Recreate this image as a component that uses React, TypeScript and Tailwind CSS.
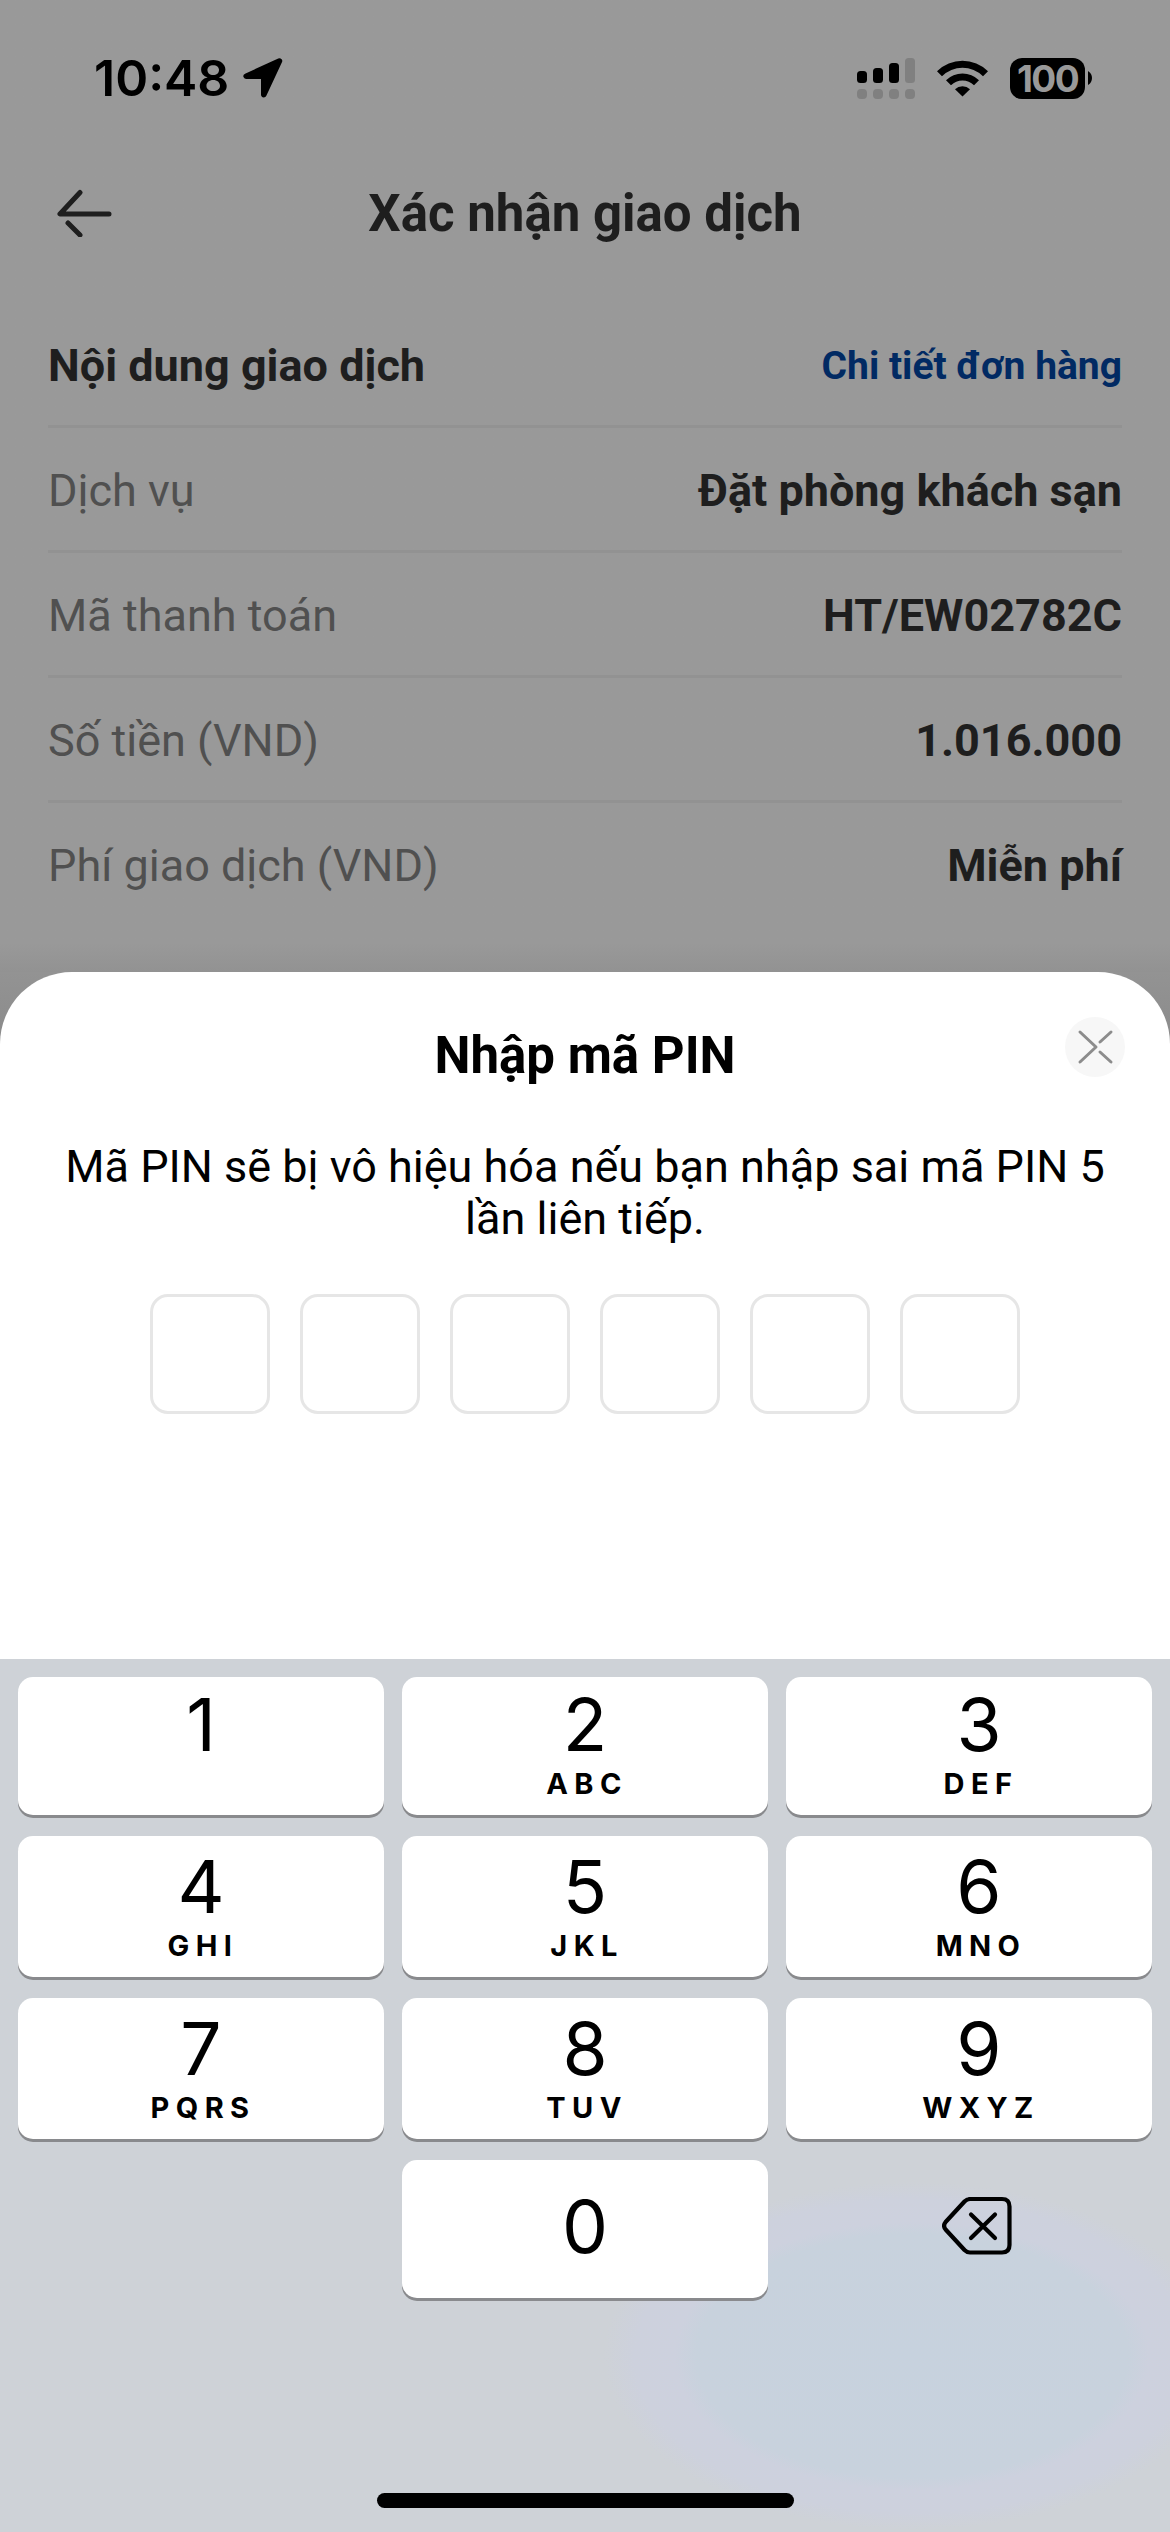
import clsx from "clsx";

type Detail = { label: string; value: string };
type Key = { digit: string; letters?: string };

const details: Detail[] = [
  { label: "Dịch vụ", value: "Đặt phòng khách sạn" },
  { label: "Mã thanh toán", value: "HT/EW02782C" },
  { label: "Số tiền (VND)", value: "1.016.000" },
  { label: "Phí giao dịch (VND)", value: "Miễn phí" }
];

const keyRows: Key[][] = [
  [{ digit: "1" }, { digit: "2", letters: "ABC" }, { digit: "3", letters: "DEF" }],
  [
    { digit: "4", letters: "GHI" },
    { digit: "5", letters: "JKL" },
    { digit: "6", letters: "MNO" }
  ],
  [
    { digit: "7", letters: "PQRS" },
    { digit: "8", letters: "TUV" },
    { digit: "9", letters: "WXYZ" }
  ]
];

function LocationIcon() {
  return (
    <svg width="40" height="40" viewBox="0 0 40 40" className="ml-[14px]">
      <path
        d="M36.4 3 L3.2 18.2 H20.8 V36.6 Z"
        stroke="#000"
        strokeWidth="5.6"
        strokeLinejoin="round"
      />
    </svg>
  );
}

function SignalIcon() {
  return (
    <svg width="58" height="41" viewBox="0 0 58 41">
      <rect x="0" y="13" width="10" height="12" rx="3.5" />
      <rect x="16" y="10" width="10" height="15" rx="3.5" />
      <rect x="32" y="5" width="10" height="20" rx="3.5" />
      <rect x="48" y="0" width="10" height="25" rx="3.5" fill="#808080" />
      {[0, 16, 32, 48].map((x) => (
        <rect key={x} x={x} y="31" width="10" height="10" rx="4" fill="#808080" />
      ))}
    </svg>
  );
}

function WifiIcon() {
  return (
    <svg width="51" height="38" viewBox="0 0 51 38" className="ml-[22px]">
      <path d="M0 12.2 A36.5 36.5 0 0 1 51 12.2 L46 17.2 A29.2 29.2 0 0 0 5 17.2 Z" />
      <path d="M9 21.2 A23.6 23.6 0 0 1 42 21.2 L37 26.2 A16.5 16.5 0 0 0 14 26.2 Z" />
      <path d="M18 30.2 A10.8 10.8 0 0 1 33 30.2 L25.5 37.6 Z" />
    </svg>
  );
}

function Battery() {
  return (
    <div className="ml-[22px] flex items-center gap-[3px]">
      <div className="flex h-[41px] w-[75px] items-center justify-center rounded-[12px] bg-black text-[37px] leading-none font-bold tracking-[-1.6px] text-[#999999]">
        100
      </div>
      <svg width="4" height="14" viewBox="0 0 4 14">
        <path d="M0 0 Q4 2.5 4 7 T0 14 Z" />
      </svg>
    </div>
  );
}

function StatusBar() {
  return (
    <div className="flex h-[156px] items-center justify-between pr-[78px] pl-[94px] font-['Inter',sans-serif] text-black">
      <div className="flex items-center">
        <span className="text-[50px] leading-none font-semibold">10:48</span>
        <LocationIcon />
      </div>
      <div className="flex items-center">
        <SignalIcon />
        <WifiIcon />
        <Battery />
      </div>
    </div>
  );
}

function DetailRow({ label, value, last }: Detail & { last: boolean }) {
  return (
    <div
      className={clsx(
        "flex h-[125px] items-center justify-between border-b-[3px] pt-[3px]",
        last ? "border-transparent" : "border-[#929292]"
      )}
    >
      <span className="text-[#505050]">{label}</span>
      <span className="font-bold text-[#1e1e1e]">{value}</span>
    </div>
  );
}

function Confirmation() {
  return (
    <section className="flex h-[972px] flex-col bg-linear-to-b from-[#999999] from-97% to-[#929292]">
      <StatusBar />
      <header className="grid h-[114px] grid-cols-[1fr_auto_1fr] items-center pl-[56px] text-[#1e1e1e]">
        <svg
          width="56"
          height="48"
          viewBox="0 0 56 48"
          fill="none"
          stroke="currentColor"
          strokeWidth="5"
          strokeLinecap="round"
          strokeLinejoin="round"
        >
          <path d="M24 3.5 L4 25 H53 M12 34 L24 46" />
        </svg>
        <h1 className="-ml-[56px] text-[51px] leading-none font-bold">Xác nhận giao dịch</h1>
      </header>
      <div className="mx-[48px] mt-[33px] text-[45px] leading-none">
        <div className="flex h-[125px] items-center justify-between border-b-[3px] border-[#929292] pt-[2px]">
          <h2 className="font-bold text-[#1e1e1e]">Nội dung giao dịch</h2>
          <a className="pt-[2px] text-[39px] font-bold text-[#012a63]">Chi tiết đơn hàng</a>
        </div>
        {details.map((item, i) => (
          <DetailRow key={item.label} {...item} last={i === details.length - 1} />
        ))}
      </div>
    </section>
  );
}

function PinSheet() {
  return (
    <div className="bg-linear-to-b from-[#939393] to-[#8b8b8b] to-10%">
      <section className="relative flex h-[687px] flex-col items-center rounded-t-[72px] bg-white pt-[58px] text-black">
        <h2 className="text-[51px] leading-[52px] font-bold">Nhập mã PIN</h2>
        <button className="absolute top-[45px] right-[45px] h-[60px] w-[60px] rounded-full bg-[#f7f7f7]">
          <svg
            width="60"
            height="60"
            viewBox="0 0 60 60"
            fill="none"
            stroke="#8c8c8c"
            strokeWidth="3"
            strokeLinecap="round"
            strokeLinejoin="round"
          >
            <path d="M15 15 L31 30 L15 45 M46 15 L35 25 M35 35 L46 45" />
          </svg>
        </button>
        <p className="mt-[59px] w-[1080px] text-center text-[45px] leading-[52px]">
          Mã PIN sẽ bị vô hiệu hóa nếu bạn nhập sai mã PIN 5 lần liên tiếp.
        </p>
        <div className="mt-[49px] flex gap-[30px]">
          {Array.from({ length: 6 }, (_, i) => (
            <div key={i} className="h-[120px] w-[120px] rounded-[18px] border-[3px] border-[#e6e6e6]" />
          ))}
        </div>
      </section>
    </div>
  );
}

function KeyButton({ digit, letters, className }: Key & { className?: string }) {
  return (
    <button
      className={clsx(
        "flex flex-col items-center rounded-[15px] bg-white text-black shadow-[0_3px_0_#898a8d]",
        className
      )}
    >
      <span className="text-[73px] leading-none">{digit}</span>
      {letters && (
        <span className="mt-[8px] pl-[4px] text-[29px] leading-none font-bold tracking-[6.4px]">{letters}</span>
      )}
    </button>
  );
}

function Keypad() {
  return (
    <section className="flex flex-1 flex-col gap-[21px] bg-[#ced2d7] bg-[radial-gradient(ellipse_308px_174px_at_912px_697px,#c7d2de_0%,#c8d2dd_70%,#cdd1de_77%,#cdd1dd_90%,#ced2d700_100%)] px-[18px] pt-[18px] font-['Inter',sans-serif]">
      {keyRows.map((row, i) => (
        <div key={i} className="grid grid-cols-3 gap-[18px]">
          {row.map((key, col) => (
            <KeyButton
              key={key.digit}
              {...key}
              className={clsx(i === 0 ? "h-[138px] pt-[11px]" : "h-[141px] pt-[14px]", col === 2 && "pl-[20px]")}
            />
          ))}
        </div>
      ))}
      <div className="grid grid-cols-3 gap-[18px]">
        <KeyButton digit="0" className="col-start-2 h-[138px] pt-[30px]" />
        <button className="flex items-center justify-center pb-[6px] pl-[15px]">
          <svg
            width="70"
            height="60"
            viewBox="0 0 70 60"
            fill="none"
            stroke="#000"
            strokeWidth="4.2"
            strokeLinecap="round"
            strokeLinejoin="round"
          >
            <path d="M27 3 H60 Q67.5 3 67.5 10.5 V49 Q67.5 56.5 60 56.5 H28 Q25 56.5 22.5 54 L3.6 33.5 Q0.6 29.8 3.6 26 L22.5 5.5 Q25 3 28 3 Z" />
            <path d="M29 18.5 L53 42 M53 18.5 L29 42" />
          </svg>
        </button>
      </div>
      <div className="mx-auto mt-auto mb-[24px] h-[15px] w-[417px] rounded-full bg-black" />
    </section>
  );
}

export default function App() {
  return (
    <main className="flex h-[2532px] w-[1170px] flex-col overflow-hidden font-['Roboto',sans-serif]">
      <Confirmation />
      <PinSheet />
      <Keypad />
    </main>
  );
}
